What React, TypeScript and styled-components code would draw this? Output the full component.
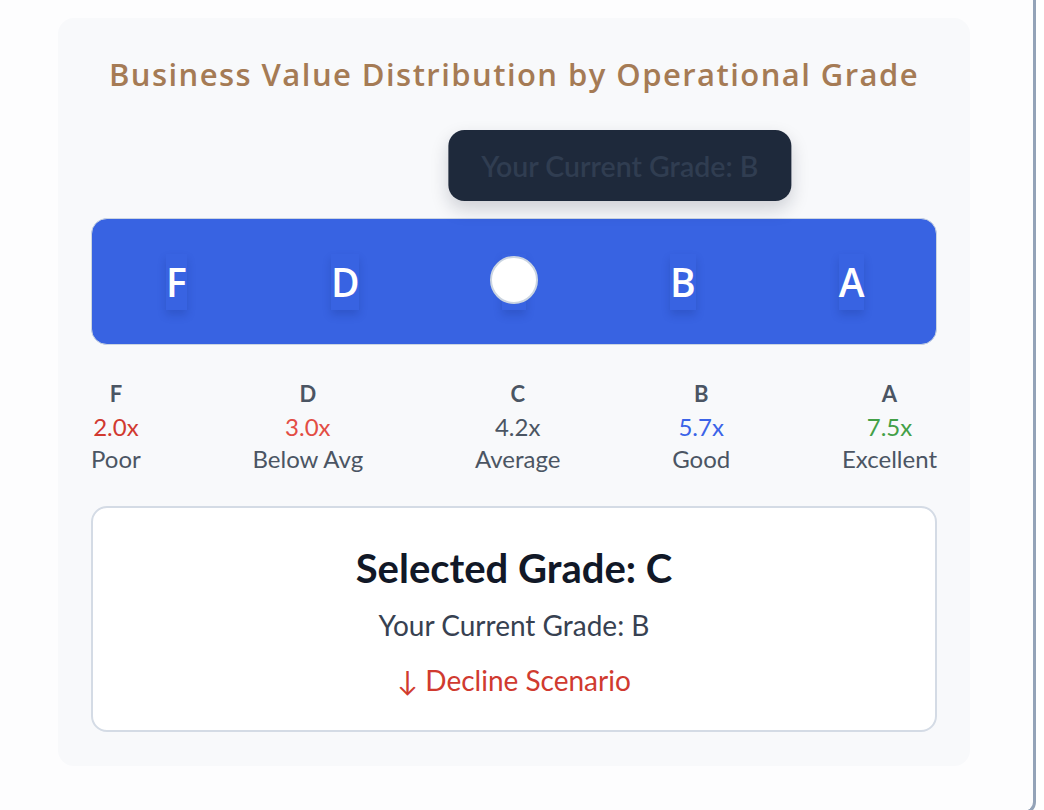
import React from 'react';
import styled, { createGlobalStyle } from 'styled-components';

const GlobalStyle = createGlobalStyle`
  html, body {
    margin: 0;
    padding: 0;
    background: #ffffff;
    overflow: hidden;
  }
  body {
    font-family: Lato, "Open Sans", "Liberation Sans", sans-serif;
  }
`;

// Outer frame, only its right edge and bottom-right corner show
const Frame = styled.div`
  box-sizing: border-box;
  width: 1036px;
  height: 814px;
  background: #fdfdfe;
  border-right: 3px solid #94a3b8;
  border-bottom: 3px solid #94a3b8;
  border-bottom-right-radius: 12px;
  padding: 18px 0 0 58px;
`;

const Card = styled.section`
  box-sizing: border-box;
  width: 912px;
  height: 748px;
  background: #f8f9fb;
  border-radius: 16px;
  padding: 39px 33px 34px;
  display: flex;
  flex-direction: column;
`;

const Title = styled.h2`
  margin: 0;
  text-align: center;
  font-family: "Open Sans", "Noto Sans", sans-serif;
  font-weight: 600;
  font-size: 31px;
  line-height: 34px;
  color: #a57b55;
  letter-spacing: 1.45px;
  white-space: nowrap;
`;

const TooltipRow = styled.div`
  margin-top: 39px;
  height: 71px;
  display: flex;
`;

const Tooltip = styled.div<{ $at: number }>`
  margin-left: ${p => p.$at}%;
  transform: translateX(-50%);
  height: 71px;
  padding: 0 33px;
  display: flex;
  align-items: center;
  background: #1e293b;
  border-radius: 16px;
  box-shadow: 0 8px 18px rgba(15, 23, 42, 0.18);
  color: #303d51;
  font-family: Lato, sans-serif;
  font-weight: 600;
  font-size: 28.5px;
  white-space: nowrap;
`;

const Track = styled.div`
  margin-top: 17px;
  height: 127px;
  box-sizing: border-box;
  background: #3863e2;
  border: 1px solid #cbd5e1;
  border-radius: 16px;
  display: grid;
  grid-template-columns: repeat(5, 1fr);
  align-items: center;
`;

const Cell = styled.div`
  position: relative;
  display: flex;
  justify-content: center;
  align-items: center;
`;

const Letter = styled.span`
  display: inline-block;
  height: 56px;
  line-height: 56px;
  font-family: "Open Sans", sans-serif;
  font-weight: 600;
  font-size: 39px;
  color: #ffffff;
  background: #3863e2;
  box-shadow: 0 5px 8px rgba(20, 40, 120, 0.22);
`;

const Thumb = styled.span`
  position: absolute;
  left: 50%;
  top: 50%;
  width: 48px;
  height: 48px;
  margin: -26px 0 0 -24px;
  box-sizing: border-box;
  border-radius: 50%;
  background: #ffffff;
  border: 2px solid #cbd5e1;
`;

const Scale = styled.div`
  margin-top: 33px;
  display: flex;
  justify-content: space-between;
`;

const Stop = styled.div`
  display: flex;
  flex-direction: column;
  align-items: center;
  font-size: 24px;
  line-height: 32.5px;
  color: #4b5563;
`;

const StopGrade = styled.span`
  font-weight: 700;
  font-size: 22px;
`;

const StopValue = styled.span<{ $color: string }>`
  color: ${p => p.$color};
`;

const Summary = styled.div`
  margin-top: 30px;
  flex: 1;
  box-sizing: border-box;
  background: #ffffff;
  border: 2px solid #d4dbe5;
  border-radius: 16px;
  display: flex;
  flex-direction: column;
  align-items: center;
  padding-top: 37px;
`;

const SummaryTitle = styled.h3`
  margin: 0;
  font-weight: 700;
  font-size: 40px;
  line-height: 46px;
  color: #111827;
`;

const SummaryLine = styled.p<{ $color: string; $gap: number }>`
  margin: ${p => p.$gap}px 0 0;
  font-size: 28px;
  line-height: 34px;
  color: ${p => p.$color};
`;

const grades = [
  { grade: 'F', value: '2.0x', label: 'Poor', color: '#d13a30' },
  { grade: 'D', value: '3.0x', label: 'Below Avg', color: '#e34d44' },
  { grade: 'C', value: '4.2x', label: 'Average', color: '#4b5563' },
  { grade: 'B', value: '5.7x', label: 'Good', color: '#3b63e8' },
  { grade: 'A', value: '7.5x', label: 'Excellent', color: '#43a047' },
];

const selected = 'C';

const App: React.FC = () => {
  return (
    <>
      <GlobalStyle />
      <Frame>
        <Card>
          <Title>Business Value Distribution by Operational Grade</Title>
          <TooltipRow>
            <Tooltip $at={62.5}>Your Current Grade: B</Tooltip>
          </TooltipRow>
          <Track>
            {grades.map(g => (
              <Cell key={g.grade}>
                <Letter>{g.grade}</Letter>
                {g.grade === selected && <Thumb />}
              </Cell>
            ))}
          </Track>
          <Scale>
            {grades.map(g => (
              <Stop key={g.grade}>
                <StopGrade>{g.grade}</StopGrade>
                <StopValue $color={g.color}>{g.value}</StopValue>
                <span>{g.label}</span>
              </Stop>
            ))}
          </Scale>
          <Summary>
            <SummaryTitle>Selected Grade: {selected}</SummaryTitle>
            <SummaryLine $color="#374151" $gap={17}>Your Current Grade: B</SummaryLine>
            <SummaryLine $color="#d03a2f" $gap={21}>↓ Decline Scenario</SummaryLine>
          </Summary>
        </Card>
      </Frame>
    </>
  );
};

export default App;
